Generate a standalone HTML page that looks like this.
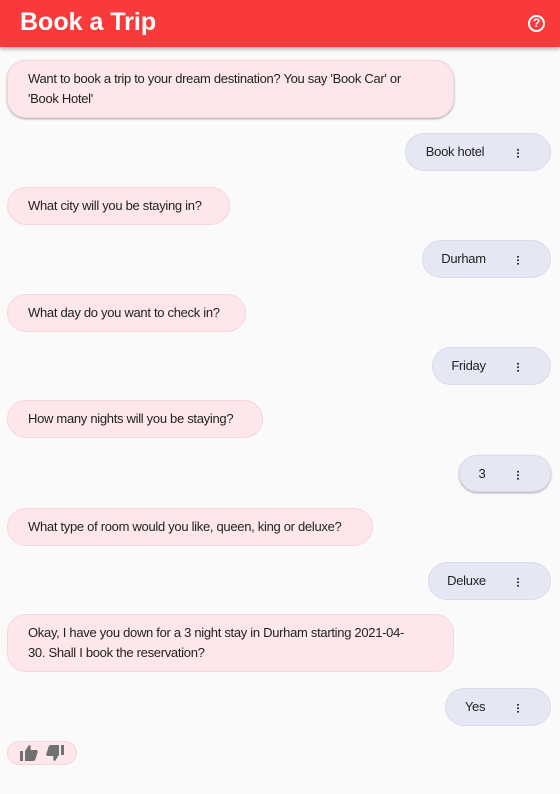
<!DOCTYPE html>
<html><head><style>
*{margin:0;padding:0;box-sizing:border-box}
body{width:560px;height:794px;background:#fafafa;font-family:"Liberation Sans",Roboto,sans-serif;position:relative;overflow:hidden;color:#222}
.hdr{position:absolute;left:0;top:0;width:560px;height:47px;background:#f93a3a;box-shadow:0 2px 4px rgba(0,0,0,.3)}
.hdr h1{position:absolute;left:20px;top:8px;font-size:25px;font-weight:bold;color:#fff}
.help{position:absolute;left:528px;top:15px;width:17px;height:17px;border:2px solid #fff;border-radius:50%;color:#fff;font-size:12px;font-weight:bold;text-align:center;line-height:13px}
.b{position:absolute;left:7px;background:#fde7ea;border:1px solid #f6d6da;border-radius:19px;font-size:13px;letter-spacing:-0.3px;padding:0 20px;line-height:20px;display:flex;align-items:center;white-space:nowrap}
.u{position:absolute;right:9px;background:#e6e7f5;border:1px solid #dadcee;border-radius:19px;font-size:13px;letter-spacing:-0.3px;height:38px;line-height:36px;white-space:nowrap;padding:0 56px 0 10px;text-align:center}
.u i{position:absolute;right:31px;top:14px;width:2px;height:10px;background:radial-gradient(circle,#333 0.9px,transparent 1.1px) 0 0/2px 3.5px repeat-y}
.sh{box-shadow:0 1px 2px rgba(0,0,0,.35)}
</style></head><body>
<div class="hdr"><h1>Book a Trip</h1><div class="help">?</div></div>
<div class="b sh" style="top:60px;width:447px;height:58px">Want to book a trip to your dream destination? You say 'Book Car' or<br>'Book Hotel'</div>
<div class="u" style="top:133px;width:146px">Book hotel<i></i></div>
<div class="b" style="top:187px;width:223px;height:38px">What city will you be staying in?</div>
<div class="u" style="top:240px;width:129px">Durham<i></i></div>
<div class="b" style="top:294px;width:239px;height:38px">What day do you want to check in?</div>
<div class="u" style="top:347px;width:119px">Friday<i></i></div>
<div class="b" style="top:400px;width:256px;height:38px">How many nights will you be staying?</div>
<div class="u sh" style="top:455px;width:92px;height:37px">3<i></i></div>
<div class="b" style="top:508px;width:366px;height:38px">What type of room would you like, queen, king or deluxe?</div>
<div class="u" style="top:562px;width:123px">Deluxe<i></i></div>
<div class="b" style="top:614px;width:447px;height:58px">Okay, I have you down for a 3 night stay in Durham starting 2021-04-<br>30. Shall I book the reservation?</div>
<div class="u" style="top:688px;width:106px">Yes<i></i></div>
<div class="b" style="top:741px;width:70px;height:24px;padding:0 0 0 11px">
<svg width="50" height="18" viewBox="0 0 50 18" fill="#707070">
<rect x="1" y="7" width="3" height="10"/><path d="M6 7 L10 1 C12 1 12 3 11.5 6 L17 6 C18.5 6 19 7 18.5 8.5 L16.5 15 C16 16.5 15 17 14 17 L6 17Z"/>
<rect x="42" y="1" width="3" height="10"/><path d="M40 11 L36 17 C34 17 34 15 34.5 12 L29 12 C27.5 12 27 11 27.5 9.5 L29.5 3 C30 1.5 31 1 32 1 L40 1Z"/>
</svg></div>
</body></html>
